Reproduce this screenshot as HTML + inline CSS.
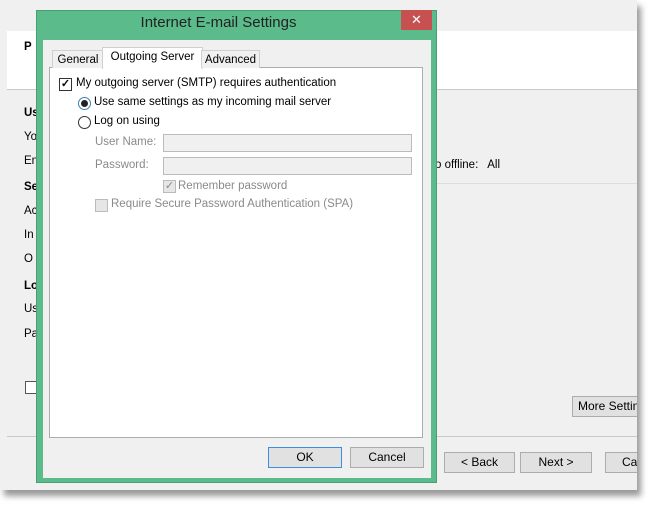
<!DOCTYPE html><html><head><style>
body{margin:0;width:650px;height:507px;background:#fff;position:relative;overflow:hidden;font-family:"Liberation Sans",sans-serif;font-size:11.5px;color:#000}
.a{position:absolute;white-space:nowrap}
.btn{position:absolute;border:1px solid #adadad;background:#e1e1e1;text-align:center;line-height:19px;font-size:12px;box-sizing:border-box;white-space:nowrap;overflow:hidden}
.g{color:#8a8a8a}
</style></head><body>
<div class="a" style="left:0;top:0;width:637px;height:490px;background:#f0f0f0;box-shadow:4px 6px 6px #999;overflow:hidden">
<div class="a" style="left:7px;top:31px;width:630px;height:58px;background:#fff;border-bottom:1px solid #c8c8c8"></div>
<div class="a" style="left:7px;top:436px;width:630px;height:1px;background:#c8c8c8"></div>
<div class="a" style="left:437px;top:183px;width:200px;height:1px;background:#ddd"></div>
<div class="btn" style="left:572px;top:396px;width:80px;height:21px;text-align:left;padding-left:5px">More Settings</div>
<div class="btn" style="left:605px;top:452px;width:50px;height:21px;text-align:left;padding-left:16px">Cancel</div>
</div>
<b class="a" style="left:24px;top:41px">P</b>
<b class="a" style="left:24px;top:107px">Us</b>
<div class="a" style="left:24px;top:131px">Yo</div>
<div class="a" style="left:24px;top:155px">En</div>
<b class="a" style="left:24px;top:181px">Se</b>
<div class="a" style="left:24px;top:205px">Ac</div>
<div class="a" style="left:24px;top:229px">In</div>
<div class="a" style="left:24px;top:253px">O</div>
<b class="a" style="left:24px;top:280px">Lo</b>
<div class="a" style="left:24px;top:303px">Us</div>
<div class="a" style="left:24px;top:328px">Pa</div>
<div class="a" style="left:25px;top:381px;width:11px;height:11px;border:1px solid #555;background:#fff"></div>
<div class="a" style="left:435px;top:159px">o offline:&nbsp;&nbsp; All</div>
<div class="btn" style="left:444px;top:452px;width:71px;height:21px">&lt; Back</div>
<div class="btn" style="left:520px;top:452px;width:72px;height:21px">Next &gt;</div>

<div class="a" style="left:36px;top:10px;width:401px;height:473px;background:#5bbb8b;border:1px solid #4a9d74;box-sizing:border-box"></div>
<div class="a" style="left:36px;top:14px;width:365px;text-align:center;font-size:15px;color:#222">Internet E-mail Settings</div>
<div class="a" style="left:401px;top:10px;width:31px;height:20px;background:#c75050;color:#fff;text-align:center;line-height:20px;font-size:13px">✕</div>
<div class="a" style="left:43px;top:40px;width:388px;height:438px;background:#f0f0f0"></div>
<div class="a" style="left:49px;top:67px;width:374px;height:371px;background:#fff;border:1px solid #adadad;box-sizing:border-box"></div>
<div class="a" style="left:52px;top:50px;width:50px;height:17px;border:1px solid #d0d0d0;border-bottom:none;background:#f0f0f0;text-align:center;line-height:18px">General</div>
<div class="a" style="left:102px;top:47px;width:99px;height:21px;border:1px solid #d0d0d0;border-bottom:none;background:#fff;text-align:center;line-height:18px">Outgoing Server</div>
<div class="a" style="left:201px;top:50px;width:57px;height:17px;border:1px solid #d0d0d0;border-bottom:none;background:#f0f0f0;text-align:center;line-height:18px">Advanced</div>
<div class="a" style="left:59px;top:78px;width:11px;height:11px;border:1px solid #333;background:#fff;font-size:11px;line-height:11px;text-align:center;font-weight:bold">✓</div>
<div class="a" style="left:76px;top:77px">My outgoing server (SMTP) requires authentication</div>
<div class="a" style="left:78px;top:97px;width:11px;height:11px;border:1px solid #3c7fb1;border-radius:50%;background:#fff"></div>
<div class="a" style="left:81px;top:100px;width:7px;height:7px;border-radius:50%;background:#222"></div>
<div class="a" style="left:94px;top:96px">Use same settings as my incoming mail server</div>
<div class="a" style="left:78px;top:116px;width:11px;height:11px;border:1px solid #333;border-radius:50%;background:#fff"></div>
<div class="a" style="left:94px;top:115px">Log on using</div>
<div class="a g" style="left:95px;top:136px">User Name:</div>
<div class="a" style="left:163px;top:134px;width:249px;height:18px;border:1px solid #bbb;background:#f0f0f0;box-sizing:border-box"></div>
<div class="a g" style="left:95px;top:159px">Password:</div>
<div class="a" style="left:163px;top:157px;width:249px;height:18px;border:1px solid #bbb;background:#f0f0f0;box-sizing:border-box"></div>
<div class="a" style="left:163px;top:180px;width:11px;height:11px;border:1px solid #bbb;background:#e6e6e6;color:#888;font-size:11px;line-height:11px;text-align:center">✓</div>
<div class="a g" style="left:178px;top:180px">Remember password</div>
<div class="a" style="left:95px;top:199px;width:11px;height:11px;border:1px solid #bbb;background:#e6e6e6"></div>
<div class="a g" style="left:111px;top:198px">Require Secure Password Authentication (SPA)</div>
<div class="btn" style="left:268px;top:447px;width:74px;height:21px;border-color:#3c8fe0">OK</div>
<div class="btn" style="left:350px;top:447px;width:74px;height:21px">Cancel</div>
</body></html>
